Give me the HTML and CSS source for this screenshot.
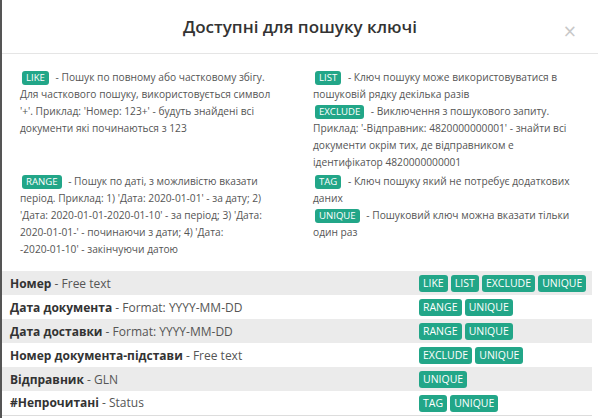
FILE: index.html
```html
<!DOCTYPE html>
<html lang="uk">
<head>
  <meta charset="UTF-8">
  <title>Доступні для пошуку ключі</title>
  <link rel="stylesheet" href="styles.css">
</head>
<body>
  <div class="modal">
    <div class="modal-header">
      <h4 class="modal-title">Доступні для пошуку ключі</h4>
      <button class="close">&times;</button>
    </div>

    <div class="modal-body">
      <div class="keys">
        <div class="key-col">
          <p><span class="label">LIKE</span> - Пошук по повному або частковому збігу. Для часткового пошуку, використовується символ '+'. Приклад: 'Номер: 123+' - будуть знайдені всі документи які починаються з 123</p>
        </div>
        <div class="key-col">
          <p><span class="label">LIST</span> - Ключ пошуку може використовуватися в пошуковій рядку декілька разів</p>
          <p><span class="label">EXCLUDE</span> - Виключення з пошукового запиту. Приклад: '-Відправник: 4820000000001' - знайти всі документи окрім тих, де відправником е ідентифікатор 4820000000001</p>
        </div>
        <div class="key-col">
          <p><span class="label">RANGE</span> - Пошук по даті, з можливістю вказати період. Приклад: 1) 'Дата: 2020-01-01' - за дату; 2) 'Дата: 2020-01-01-2020-01-10' - за період; 3) 'Дата: 2020-01-01-' - починаючи з дати; 4) 'Дата: <span class="nowrap">-2020-01-10'</span> - закінчуючи датою</p>
        </div>
        <div class="key-col">
          <p><span class="label">TAG</span> - Ключ пошуку який не потребує додаткових даних</p>
          <p><span class="label">UNIQUE</span> - Пошуковий ключ можна вказати тільки один раз</p>
        </div>
      </div>

      <table class="fields">
        <tr>
          <td><b>Номер</b> - Free text</td>
          <td><span class="label">LIKE</span> <span class="label">LIST</span> <span class="label">EXCLUDE</span> <span class="label">UNIQUE</span></td>
        </tr>
        <tr>
          <td><b>Дата документа</b> - Format: YYYY-MM-DD</td>
          <td><span class="label">RANGE</span> <span class="label">UNIQUE</span></td>
        </tr>
        <tr>
          <td><b>Дата доставки</b> - Format: YYYY-MM-DD</td>
          <td><span class="label">RANGE</span> <span class="label">UNIQUE</span></td>
        </tr>
        <tr>
          <td><b>Номер документа-підстави</b> - Free text</td>
          <td><span class="label">EXCLUDE</span> <span class="label">UNIQUE</span></td>
        </tr>
        <tr>
          <td><b>Відправник</b> - GLN</td>
          <td><span class="label">UNIQUE</span></td>
        </tr>
        <tr>
          <td><b>#Непрочитані</b> - Status</td>
          <td><span class="label">TAG</span> <span class="label">UNIQUE</span></td>
        </tr>
      </table>
    </div>
  </div>
</body>
</html>
```

FILE: styles.css
```css
html, body {
  margin: 0;
  padding: 0;
  height: 100%;
  background-color: #fff;
  font-family: 'Open Sans', 'Noto Sans', sans-serif;
}

.modal {
  height: 100%;
  box-sizing: border-box;
  border-left: 2px solid #555;
  background-color: white;
  color: #555;
}

.modal-header {
  position: relative;
  height: 53px;
  border-bottom: 1px solid #e5e5e5;
  display: flex;
  align-items: center;
  justify-content: center;
}

.modal-title {
  margin: 0;
  font-size: 17px;
  font-weight: 600;
  color: #333;
}

.close {
  position: absolute;
  right: 21px;
  top: 21px;
  border: none;
  background: none;
  padding: 0;
  font-family: 'DejaVu Sans', sans-serif;
  font-size: 17px;
  line-height: 20px;
  color: #c8c8c8;
  cursor: pointer;
}

.modal-body {
  padding: 15px 0 0 0;
}

.keys {
  display: grid;
  grid-template-columns: 258px 265px;
  column-gap: 35px;
  row-gap: 2px;
  padding: 0 18px;
  font-size: 10.2px;
  line-height: 17px;
}

.key-col p {
  margin: 0;
}

.nowrap {
  white-space: nowrap;
}

.label {
  display: inline-block;
  background-color: #22a688;
  color: white;
  border-radius: 3px;
  font-size: 9.6px;
  line-height: 12px;
  padding: 1px 4px;
  margin: 0 4px 0 2px;
}

.fields {
  width: 590px;
  margin-top: 13px;
  border-collapse: collapse;
  font-size: 12px;
  color: #555;
}

.fields td {
  height: 24px;
  padding: 0 8px;
  box-sizing: border-box;
}

.fields td:first-child {
  width: 409px;
}

.fields td:last-child {
  padding-right: 0;
  white-space: nowrap;
}

.fields tr:nth-child(odd) {
  background-color: #ebebeb;
}

.fields tr:last-child {
  border-bottom: 1px solid #ddd;
}

.fields b {
  color: #333;
}

.fields .label {
  font-size: 10.5px;
  line-height: 13px;
  padding: 2px 4px;
  margin: 0;
}
```
